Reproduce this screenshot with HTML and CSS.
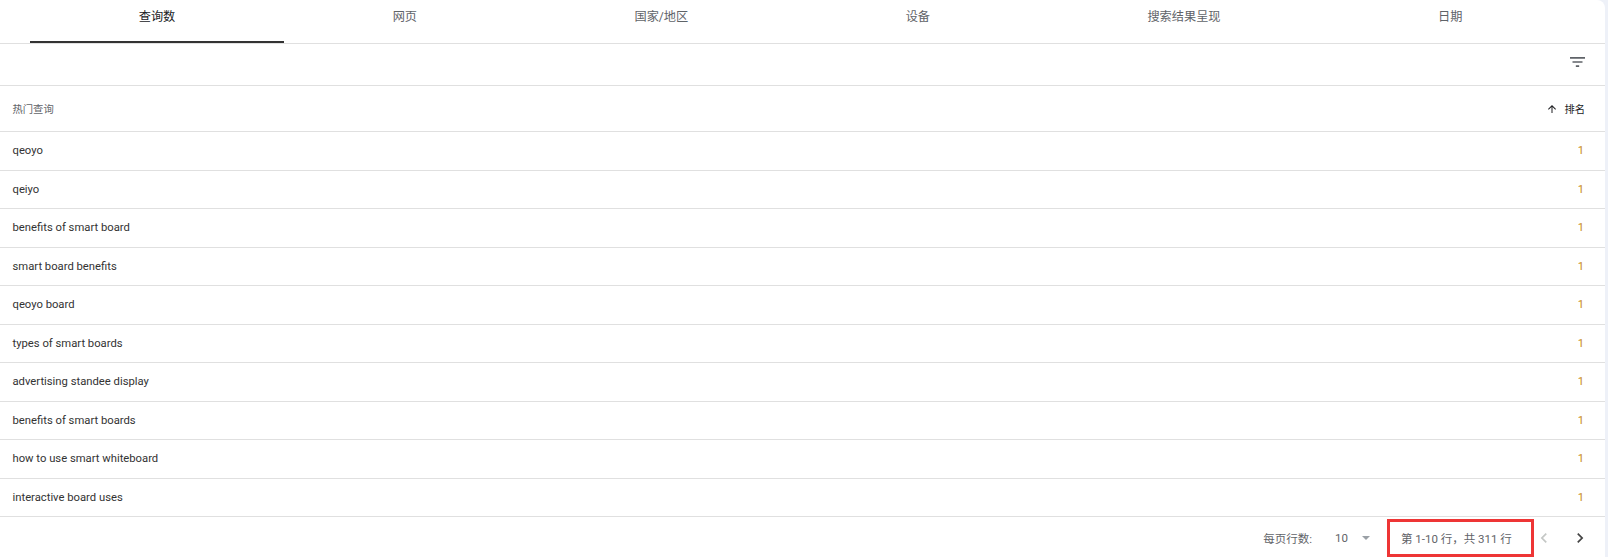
FILE: index.html
```html
<!DOCTYPE html>
<html lang="zh-CN">
<head>
  <meta charset="UTF-8">
  <meta name="viewport" content="width=device-width, initial-scale=1.0">
  <title>效果 - 查询数</title>
  <link rel="stylesheet" href="styles.css">
</head>

<body>
  <div class="card">
    <nav class="tabs">
      <div class="tab active">查询数</div>
      <div class="tab">网页</div>
      <div class="tab">国家/地区</div>
      <div class="tab">设备</div>
      <div class="tab">搜索结果呈现</div>
      <div class="tab">日期</div>
    </nav>

    <div class="toolbar">
      <svg class="filter-icon" width="15" height="10" viewBox="3 6 18 12">
        <path d="M10 18h4v-2h-4v2zM3 6v2h18V6H3zm3 7h12v-2H6v2z" fill="#5f6368"/>
      </svg>
    </div>

    <div class="table-head">
      <span>热门查询</span>
      <span class="sort">
        <svg width="12" height="12" viewBox="0 0 24 24">
          <path d="M4 12l1.41 1.41L11 7.83V20h2V7.83l5.58 5.59L20 12l-8-8-8 8z" fill="#202124"/>
        </svg>
        排名
      </span>
    </div>

    <div class="rows">
      <div class="row"><span>qeoyo</span><span class="rank">1</span></div>
      <div class="row"><span>qeiyo</span><span class="rank">1</span></div>
      <div class="row"><span>benefits of smart board</span><span class="rank">1</span></div>
      <div class="row"><span>smart board benefits</span><span class="rank">1</span></div>
      <div class="row"><span>qeoyo board</span><span class="rank">1</span></div>
      <div class="row"><span>types of smart boards</span><span class="rank">1</span></div>
      <div class="row"><span>advertising standee display</span><span class="rank">1</span></div>
      <div class="row"><span>benefits of smart boards</span><span class="rank">1</span></div>
      <div class="row"><span>how to use smart whiteboard</span><span class="rank">1</span></div>
      <div class="row"><span>interactive board uses</span><span class="rank">1</span></div>
    </div>

    <div class="pager">
      <span class="per-page-label">每页行数:</span>
      <span class="per-page">
        10
        <svg class="caret" width="8" height="4" viewBox="0 0 8 4"><path d="M0 0h8L4 4z" fill="#9aa0a6"/></svg>
      </span>
      <span class="range">第 1-10 行，共 311 行</span>
      <svg class="nav prev" width="20" height="20" viewBox="0 0 24 24">
        <path d="M15.41 7.41L14 6l-6 6 6 6 1.41-1.41L10.83 12z"/>
      </svg>
      <svg class="nav next" width="20" height="20" viewBox="0 0 24 24">
        <path d="M10 6L8.59 7.41 13.17 12l-4.58 4.59L10 18l6-6z"/>
      </svg>
    </div>
  </div>
</body>
</html>
```

FILE: styles.css
```css
body {
  margin: 0;
  background-color: #eef1f8;
  font-family: Roboto, "Noto Sans CJK SC", sans-serif;
}

.card {
  width: 1605px;
  min-height: 557px;
  background-color: #fff;
  border-top-right-radius: 8px;
}

/* tab strip */
.tabs {
  display: flex;
  height: 44px;
  box-sizing: border-box;
  padding: 0 34px 0 30px;
  border-bottom: 1px solid #e0e0e0;
}

.tab {
  flex: 1 1 auto;
  height: 43px;
  box-sizing: border-box;
  padding-top: 10px;
  text-align: center;
  font-size: 12.2px;
  line-height: 15px;
  color: #5f6368;
}

.tab.active {
  color: #202124;
  border-bottom: 2px solid #333;
}

/* filter bar */
.toolbar {
  display: flex;
  justify-content: flex-end;
  align-items: flex-start;
  height: 42px;
  box-sizing: border-box;
  padding: 13px 20px 0 0;
  border-bottom: 1px solid #e0e0e0;
}

.filter-icon {
  display: block;
}

/* table */
.table-head {
  display: flex;
  justify-content: space-between;
  align-items: center;
  height: 46px;
  box-sizing: border-box;
  padding: 0 20px 0 12.5px;
  border-bottom: 1px solid #e0e0e0;
  font-size: 10.3px;
  color: #5f6368;
}

.sort {
  display: flex;
  align-items: center;
  gap: 6px;
  color: #202124;
}

.row {
  display: flex;
  justify-content: space-between;
  align-items: center;
  height: 38.5px;
  box-sizing: border-box;
  padding: 0 21px 0 12.5px;
  border-bottom: 1px solid #e0e0e0;
  font-size: 11.25px;
  color: #333;
}

.rank {
  color: #c98b16;
}

/* pagination */
.pager {
  display: flex;
  justify-content: flex-end;
  align-items: center;
  height: 40px;
  box-sizing: border-box;
  padding: 2px 15px 0 0;
  font-size: 11.5px;
  color: #5f6368;
}

.per-page-label {
  margin-right: 23px;
}

.per-page {
  display: flex;
  align-items: center;
  margin-right: 17px;
}

.caret {
  margin-left: 14px;
}

.range {
  display: flex;
  align-items: center;
  width: 147px;
  height: 38px;
  box-sizing: border-box;
  padding-left: 11px;
  border: 3px solid #ee3535;
}

.nav {
  display: block;
}

.prev {
  fill: #c4c7c5;
}

.next {
  fill: #444;
  margin-left: 16px;
}
```
